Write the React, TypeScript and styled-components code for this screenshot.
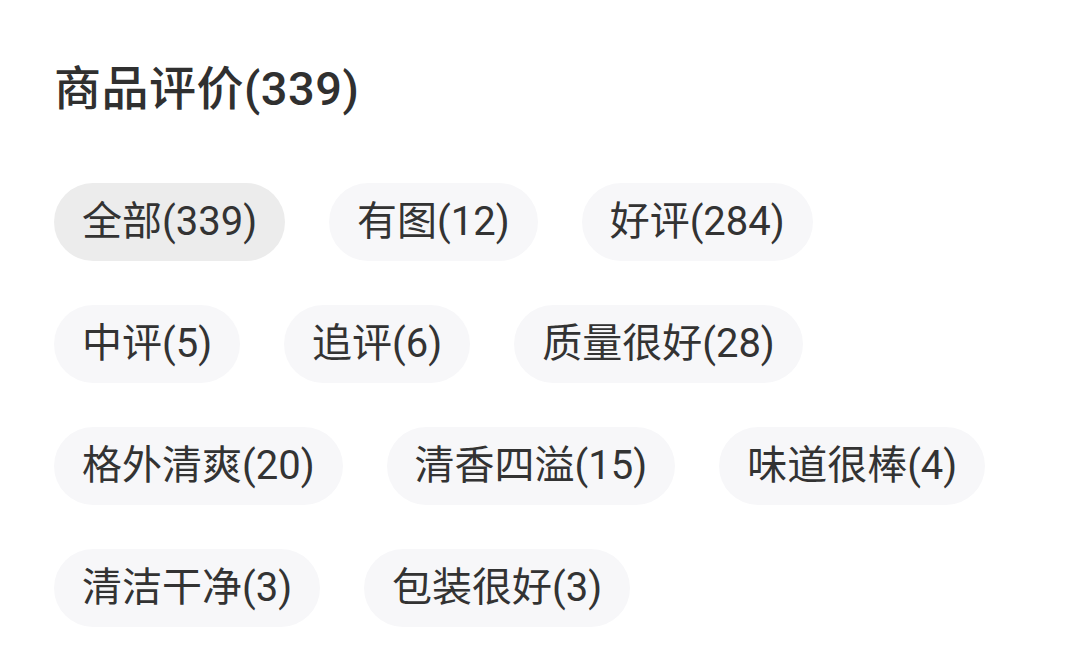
import React from "react";
import styled, { createGlobalStyle } from "styled-components";

const GlobalStyle = createGlobalStyle`
  html, body {
    margin: 0;
    padding: 0;
    background: #ffffff;
  }
  body {
    font-family: "Roboto", "Noto Sans CJK SC", sans-serif;
    color: #333333;
  }
`;

const Page = styled.div`
  width: 1080px;
  height: 653px;
  box-sizing: border-box;
  padding: 59px 54px 0 54px;
  background: #ffffff;
  overflow: hidden;
`;

const Title = styled.h2`
  margin: 0 0 64px 0;
  font-size: 47px;
  line-height: 60px;
  font-weight: 500;
  color: #303030;
  letter-spacing: 0.5px;
`;

const TagList = styled.div`
  display: flex;
  flex-direction: column;
  gap: 44px;
`;

const TagRow = styled.div`
  display: flex;
  gap: 44px;
`;

const Tag = styled.button<{ $active?: boolean }>`
  appearance: none;
  border: none;
  margin: 0;
  height: 78px;
  padding: 0 28px;
  border-radius: 39px;
  background: ${(p) => (p.$active ? "#ececec" : "#f7f7f9")};
  font-family: "Roboto", "Noto Sans CJK SC", sans-serif;
  font-size: 40px;
  line-height: 78px;
  font-weight: 400;
  color: #333333;
  white-space: nowrap;
  cursor: pointer;
`;

const rows: { label: string; active?: boolean }[][] = [
  [{ label: "全部(339)", active: true }, { label: "有图(12)" }, { label: "好评(284)" }],
  [{ label: "中评(5)" }, { label: "追评(6)" }, { label: "质量很好(28)" }],
  [{ label: "格外清爽(20)" }, { label: "清香四溢(15)" }, { label: "味道很棒(4)" }],
  [{ label: "清洁干净(3)" }, { label: "包装很好(3)" }],
];

export default function App() {
  return (
    <>
      <GlobalStyle />
      <Page>
        <Title>商品评价(339)</Title>
        <TagList>
          {rows.map((row, i) => (
            <TagRow key={i}>
              {row.map((t) => (
                <Tag key={t.label} $active={t.active}>
                  {t.label}
                </Tag>
              ))}
            </TagRow>
          ))}
        </TagList>
      </Page>
    </>
  );
}
